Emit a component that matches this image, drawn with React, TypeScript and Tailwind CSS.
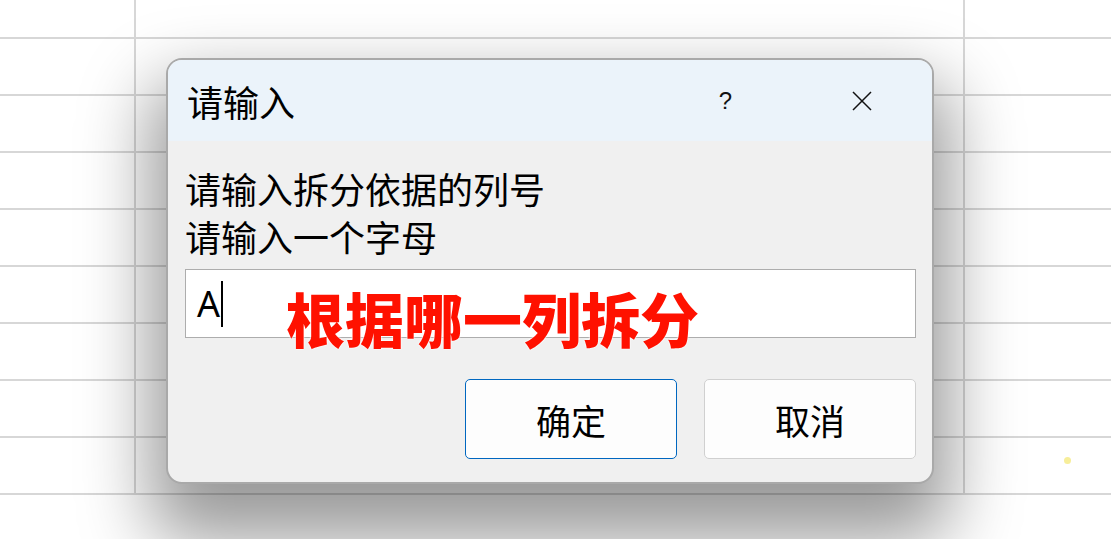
import React from "react";

const rows = Array.from({ length: 9 });

export default function App() {
  return (
    <div className="relative w-[1111px] h-[539px] overflow-hidden bg-white [font-family:'Noto_Sans_CJK_SC','Noto_Sans',sans-serif]">
      {/* spreadsheet grid */}
      <div className="flex flex-col">
        {rows.map((_, i) => (
          <div
            key={i}
            className={`flex border-b-2 border-[#d7d7d7] ${i === 0 ? "h-[39px]" : "h-[57px]"}`}
          >
            <div className="w-[136px] border-r-2 border-[#d7d7d7]" />
            <div className="w-[829px] border-r-2 border-[#d7d7d7]" />
            <div className="flex-1" />
          </div>
        ))}
      </div>

      {/* small yellow dot */}
      <div className="absolute left-[1064px] top-[457px] w-[7px] h-[7px] rounded-full bg-[#f7ee9a]" />

      {/* dialog */}
      <div className="absolute left-[166px] top-[58px] w-[768px] h-[426px] rounded-[16px] border-2 border-[#a9a9a9] bg-[#f0f0f0] overflow-hidden shadow-[0_40px_70px_16px_rgba(0,0,0,0.4)] flex flex-col">
        {/* title bar */}
        <div className="h-[81px] bg-[#ebf3fa] flex items-center pl-[19px] shrink-0">
          <span className="text-[36px] leading-none text-black">请输入</span>
          <span className="ml-auto mr-[120px] text-[24px] leading-none text-[#111] [font-family:'Liberation_Sans',sans-serif]">?</span>
          <svg className="mr-[60px]" width="20" height="20" viewBox="0 0 20 20">
            <path d="M1 1L19 19M19 1L1 19" stroke="#111" strokeWidth="1.5" fill="none" />
          </svg>
        </div>

        {/* body */}
        <div className="flex flex-col pl-[17px] pr-[16px] pt-[23px]">
          <div className="text-[36px] leading-[48px] text-black">请输入拆分依据的列号</div>
          <div className="text-[36px] leading-[48px] text-black">请输入一个字母</div>

          <div className="mt-[9px] h-[69px] border border-[#adadad] bg-white flex items-center pl-[11px]">
            <span className="text-[36px] leading-none text-black [font-family:'Noto_Sans',sans-serif]">A</span>
            <span className="w-[2px] h-[46px] bg-black ml-[1px]" />
          </div>

          <div className="mt-[41px] flex justify-end gap-[27px]">
            <button className="w-[212px] h-[80px] rounded-[5px] border border-[#0067c0] bg-[#fdfdfd] text-[35px] text-black leading-none flex items-center justify-center">
              确定
            </button>
            <button className="w-[212px] h-[80px] rounded-[5px] border border-[#d0d0d0] bg-[#fdfdfd] text-[35px] text-black leading-none flex items-center justify-center">
              取消
            </button>
          </div>
        </div>
      </div>

      {/* red annotation */}
      <div className="absolute left-[286px] top-[288px] text-[59px] leading-none font-black text-[#ff1100] [text-shadow:0_0_2px_#fff,0_0_2px_#fff] whitespace-nowrap">
        根据哪一列拆分
      </div>
    </div>
  );
}
